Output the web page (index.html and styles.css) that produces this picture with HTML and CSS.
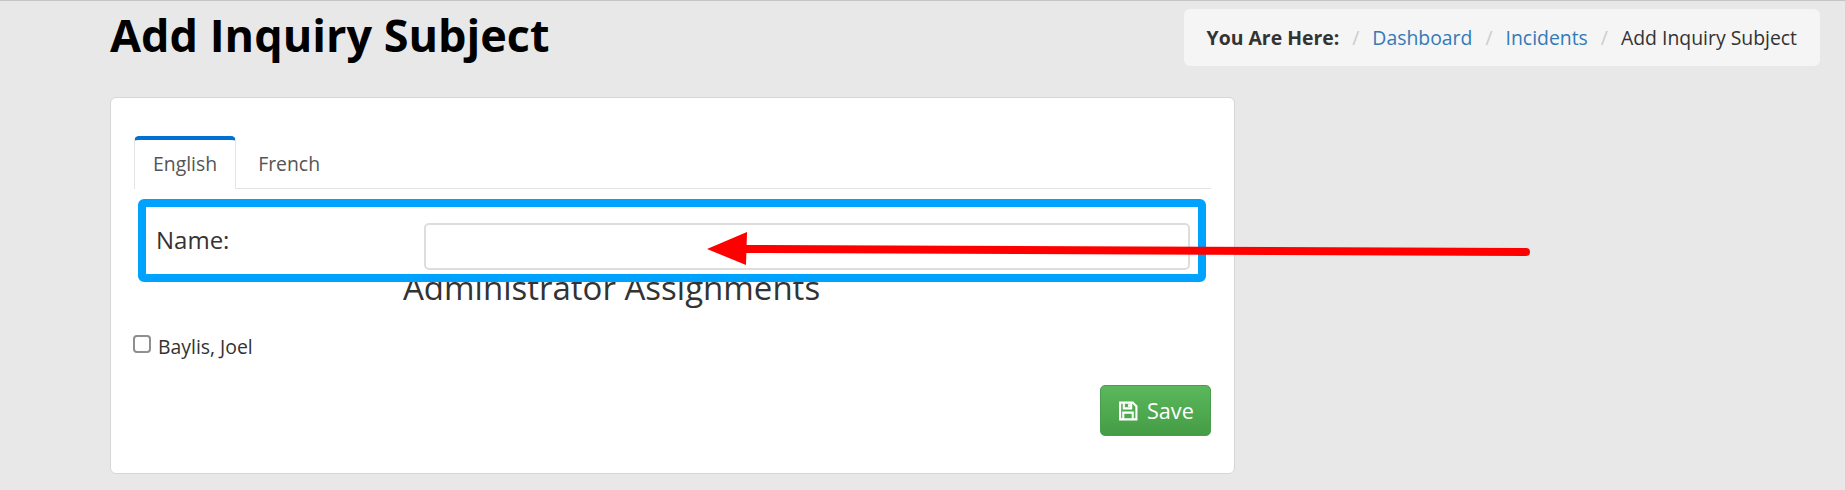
FILE: index.html
```html
<!DOCTYPE html>
<html lang="en">

<head>
  <meta charset="UTF-8">
  <title>Add Inquiry Subject</title>
  <link rel="stylesheet" href="styles.css">
</head>

<body>
  <header class="page-head">
    <h1>Add Inquiry Subject</h1>
    <ol class="crumbs">
      <li class="crumbs-label">You Are Here:</li>
      <li><a href="#">Dashboard</a></li>
      <li><a href="#">Incidents</a></li>
      <li>Add Inquiry Subject</li>
    </ol>
  </header>

  <main class="card">
    <ul class="tabs">
      <li class="tab active">English</li>
      <li class="tab">French</li>
    </ul>

    <div class="name-row">
      <label for="name">Name:</label>
      <input type="text" id="name">
    </div>

    <h2>Administrator Assignments</h2>

    <label class="check"><input type="checkbox"> Baylis, Joel</label>

    <div class="actions">
      <button type="button" class="save">
        <svg width="20" height="20" viewBox="0 0 19 19" fill="none" stroke="#fff" stroke-width="2">
          <path d="M2 1.5h12l3.500 3.500v12.500h-15.500z" />
          <path d="M5.500 2v5h7v-5" />
          <path d="M5 17v-6h9v6" />
          <path d="M10.500 3v2.500" />
        </svg>
        Save
      </button>
    </div>
  </main>

  <!-- annotation drawn over the screenshot -->
  <svg class="markup" width="1845" height="490" viewBox="0 0 1845 490">
    <rect x="142" y="203" width="1060" height="75" rx="2" fill="none" stroke="#00a2ff" stroke-width="8" />
    <path d="M746 249 L1526 252" stroke="#f00" stroke-width="8" stroke-linecap="round" fill="none" />
    <path d="M707 249 L747 232 L746 265 Z" fill="#f00" />
  </svg>
</body>

</html>
```

FILE: styles.css
```css
* {
  box-sizing: border-box;
}

body {
  margin: 0;
  height: 490px;
  overflow: hidden;
  background: #e8e8e8;
  border-top: 1px solid #c4c4c4;
  font-family: "Open Sans", sans-serif;
  font-size: 19.4px;
  color: #333;
}

.page-head {
  display: flex;
  justify-content: space-between;
  align-items: flex-start;
  padding: 5px 25px 0 110px;
  height: 96px;
}

h1 {
  margin: 0;
  font-size: 45px;
  line-height: 58px;
  font-weight: 700;
  color: #000;
}

.crumbs {
  display: flex;
  align-items: center;
  height: 57px;
  margin: 3px 0 0;
  padding: 0 23px;
  list-style: none;
  background: #f5f5f5;
  border-radius: 6px;
}

.crumbs li + li::before {
  content: "/";
  padding: 0 13px;
  color: #ccc;
}

.crumbs-label {
  font-weight: 700;
}

.crumbs a {
  color: #337ab7;
  text-decoration: none;
}

.card {
  width: 1125px;
  height: 377px;
  margin-left: 110px;
  padding: 38px 23px 0 23px;
  background: #fff;
  border: 1px solid #d6d6d6;
  border-radius: 6px;
}

.tabs {
  display: flex;
  height: 53px;
  margin: 0;
  padding: 0;
  list-style: none;
  border-bottom: 1px solid #e4e4e4;
}

.tab {
  padding: 14px 18px 0;
  height: 53px;
  color: #555;
}

.tab.active {
  background: #fff;
  border: 1px solid #e4e4e4;
  border-top: 4px solid #0070d2;
  border-bottom: 0;
  border-radius: 5px 5px 0 0;
  padding-top: 10px;
}

.tab.active + .tab {
  padding-left: 22px;
}

.name-row {
  display: flex;
  margin: 34px 0 0 22px;
  height: 48px;
  font-size: 24px;
}

.name-row label {
  width: 268px;
  line-height: 34px;
}

.name-row input {
  width: 766px;
  height: 47px;
  border: 2px solid #ddd;
  border-radius: 5px;
  background: #fff;
}

h2 {
  margin: -5px 0 0 269px;
  font-size: 33px;
  line-height: 44px;
  font-weight: 400;
}

.check {
  display: flex;
  align-items: center;
  gap: 7px;
  margin-top: 23px;
}

.check input {
  width: 18px;
  height: 18px;
  margin: -5px 0 0 -1px;
  appearance: none;
  border: 2px solid #8f8f8f;
  border-radius: 4px;
  background: #fff;
}

.actions {
  display: flex;
  justify-content: flex-end;
  margin-top: 25px;
}

.save {
  display: flex;
  align-items: center;
  gap: 9px;
  height: 51px;
  width: 111px;
  padding: 0 0 0 17px;
  border: 1px solid #4a9c4e;
  border-radius: 5px;
  background: linear-gradient(#5cb85c, #449d44);
  color: #fff;
  font-family: inherit;
  font-size: 21.6px;
}

.markup {
  position: absolute;
  top: 0;
  left: 0;
  pointer-events: none;
}
```
